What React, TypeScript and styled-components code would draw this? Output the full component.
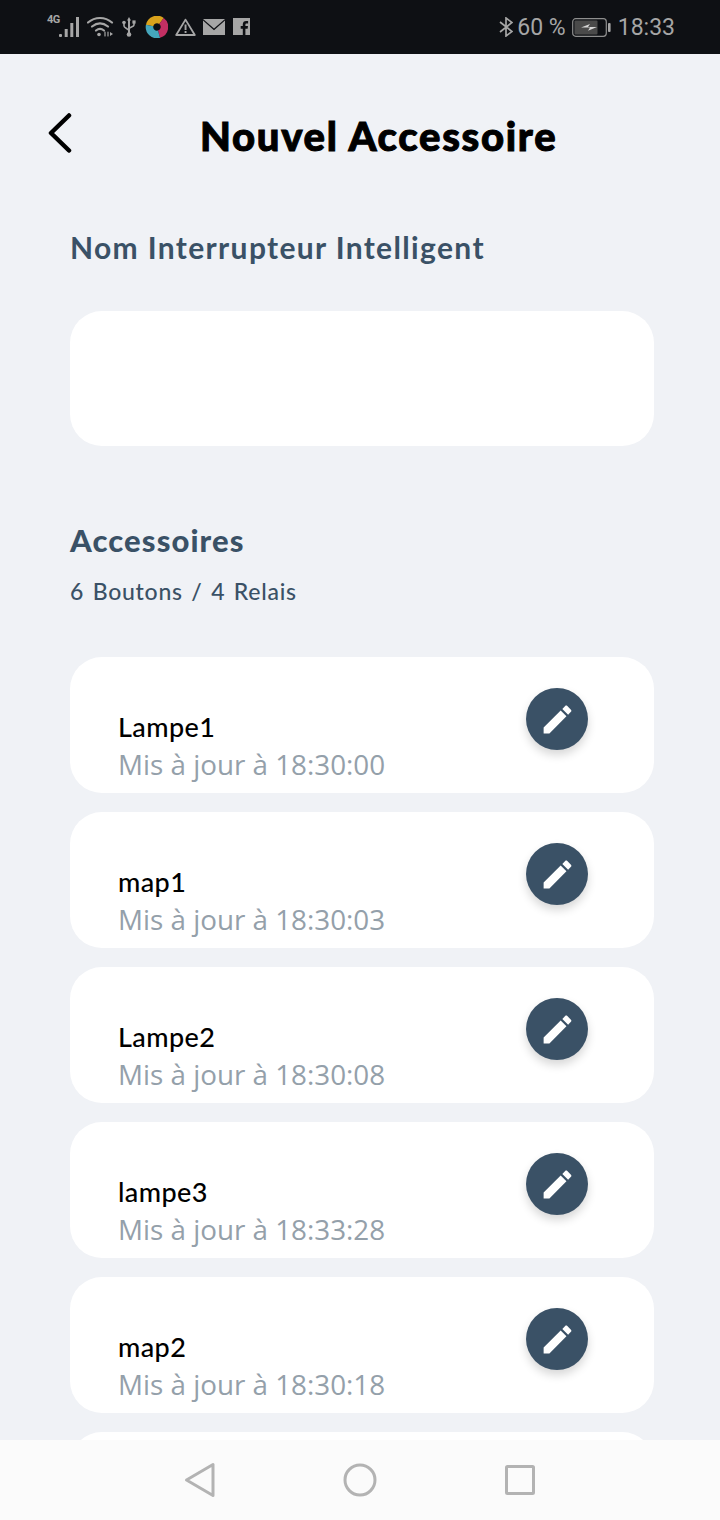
import styled, { createGlobalStyle } from "styled-components";

const accessories = [
    { name: "Lampe1", time: "18:30:00" },
    { name: "map1", time: "18:30:03" },
    { name: "Lampe2", time: "18:30:08" },
    { name: "lampe3", time: "18:33:28" },
    { name: "map2", time: "18:30:18" },
    { name: "", time: "" },
];

const GlobalStyle = createGlobalStyle`
    html, body {
        margin: 0;
        padding: 0;
        background: #f0f2f6;
    }
    * {
        box-sizing: border-box;
    }
`;

const StatusIconsLeft = () => (
    <LeftIcons>
        <FourG>4G</FourG>
        <svg width="21" height="20" viewBox="0 0 21 20" fill="#a6a6a6">
            <rect x="0" y="17" width="3" height="3" rx="1" />
            <rect x="5.7" y="12" width="3" height="8" />
            <rect x="11.3" y="6" width="3" height="14" />
            <rect x="17" y="0" width="3" height="20" />
        </svg>
        <svg width="27" height="21" viewBox="0 0 27 21" fill="none" stroke="#a6a6a6" strokeWidth="2.2" strokeLinecap="round">
            <path d="M1 6.5C8 .5 18 .5 25 6.5" />
            <path d="M5 10.5C10 6.5 16 6.5 21 10.5" />
            <path d="M9 14.5C11.5 12.5 14.5 12.5 17 14.5" />
            <circle cx="12" cy="18.5" r="1.8" fill="#a6a6a6" stroke="none" />
            <path d="M18 16v4M21 16v4" strokeWidth="1.2" />
            <path d="M23 16l3 2-3 2z" fill="#a6a6a6" stroke="none" />
        </svg>
        <svg width="16" height="20" viewBox="-1 0 16 20" fill="none" stroke="#a6a6a6" strokeWidth="1.6">
            <path d="M7 3v14" strokeWidth="2" />
            <path d="M5 3.5L7 0l2 3.5z" fill="#a6a6a6" stroke="none" />
            <circle cx="7" cy="17.5" r="2.3" fill="#a6a6a6" stroke="none" />
            <path d="M2 6v3c0 2 5 3 5 5" />
            <path d="M12 5v3c0 2-5 2-5 4" />
            <circle cx="2" cy="5.5" r="1.8" fill="#a6a6a6" stroke="none" />
            <rect x="10.4" y="3.4" width="3.2" height="3.2" fill="#a6a6a6" stroke="none" />
        </svg>
        <svg width="24" height="22" viewBox="-2 0 24 22" fill="none" strokeWidth="7.5">
            <path d="M3.6 9.5A7.5 7.5 0 0 1 15.5 5" stroke="#d9a21c" />
            <path d="M15.5 5A7.5 7.5 0 0 1 13 18.2" stroke="#c22f63" />
            <path d="M13 18.2A7.5 7.5 0 0 1 3.6 9.5" stroke="#45a6bc" />
        </svg>
        <svg width="21" height="18" viewBox="0 0 21 18" fill="none">
            <path d="M10.5 1.6L1.2 17h18.6z" stroke="#a6a6a6" strokeWidth="1.8" strokeLinejoin="round" />
            <rect x="9.6" y="6.5" width="1.9" height="5.5" fill="#a6a6a6" />
            <rect x="9.6" y="13" width="1.9" height="2" fill="#a6a6a6" />
        </svg>
        <svg width="22" height="16" viewBox="0 0 22 16">
            <path d="M0 0h22L11 9.5z" fill="#a6a6a6" />
            <path d="M0 1.6V16h22V1.6L11 11.2z" fill="#a6a6a6" />
        </svg>
        <svg width="18" height="17" viewBox="-1 0 18 17">
            <path
                fillRule="evenodd"
                d="M0 0h17v17h-4.6v-6.3h2.2l.4-2.6h-2.6V6.6c0-.8.3-1.2 1.3-1.2h1.4V3.1c-.5-.1-1.2-.1-2-.1-2 0-3.3 1.2-3.3 3.3v1.8H7.7v2.6h2.1V17H0z"
                fill="#a6a6a6"
            />
        </svg>
    </LeftIcons>
);

const StatusIconsRight = () => (
    <RightIcons>
        <svg width="14" height="20" viewBox="0 0 14 20" fill="none" stroke="#a6a6a6" strokeWidth="1.7">
            <path d="M1 5l12 9.5L7 19V1l6 4.5L1 15" />
        </svg>
        <StatusText>60 %</StatusText>
        <BatteryIcon width="39" height="19" viewBox="0 0 39 19">
            <rect x="0.7" y="0.7" width="33.6" height="17.6" rx="3" fill="none" stroke="#8e8e8e" strokeWidth="1.2" />
            <rect x="2.5" y="2.5" width="23" height="14" rx="1" fill="#4a4a4a" />
            <path d="M9 9.5l9-3.5-2 3h9l-9 3.8 2-3.3z" fill="#d6d6d6" />
            <rect x="36" y="5" width="2.6" height="9" rx="1" fill="#a6a6a6" />
        </BatteryIcon>
        <StatusText>18:33</StatusText>
    </RightIcons>
);

const EditIcon = () => (
    <svg width="37" height="37" viewBox="0 0 24 24" fill="#ffffff">
        <path d="M3 17.25V21h3.75L17.81 9.94l-3.75-3.75L3 17.25zM20.71 7.04c.39-.39.39-1.02 0-1.41l-2.34-2.34c-.39-.39-1.02-.39-1.41 0l-1.83 1.83 3.75 3.75 1.83-1.83z" />
    </svg>
);

export default function App() {
    return (
        <Screen>
            <GlobalStyle />
            <StatusBar>
                <StatusIconsLeft />
                <StatusIconsRight />
            </StatusBar>
            <Content>
                <Header>
                    <BackButton>
                        <svg width="26" height="40" viewBox="0 0 26 40" fill="none" stroke="#000000" strokeWidth="4.5" strokeLinecap="round" strokeLinejoin="round">
                            <path d="M21 2.5L3 20l18 17.5" />
                        </svg>
                    </BackButton>
                    <Title>Nouvel Accessoire</Title>
                </Header>
                <FieldLabel>Nom Interrupteur Intelligent</FieldLabel>
                <NameInput />
                <SectionTitle>Accessoires</SectionTitle>
                <SectionCount>6 Boutons / 4 Relais</SectionCount>
                <List>
                    {accessories.map((item, index) => (
                        <Card key={index}>
                            {item.name && (
                                <>
                                    <CardText>
                                        <CardName>{item.name}</CardName>
                                        <CardTime>Mis à jour à {item.time}</CardTime>
                                    </CardText>
                                    <EditButton>
                                        <EditIcon />
                                    </EditButton>
                                </>
                            )}
                        </Card>
                    ))}
                </List>
            </Content>
            <NavBar>
                <svg width="32" height="36" viewBox="0 0 32 36" fill="none" stroke="#b3b3b3" strokeWidth="3" strokeLinejoin="round">
                    <path d="M29 2.5v31L2.5 18z" />
                </svg>
                <svg width="34" height="34" viewBox="0 0 34 34" fill="none" stroke="#b3b3b3" strokeWidth="3">
                    <circle cx="17" cy="17" r="15" />
                </svg>
                <svg width="32" height="30" viewBox="0 0 32 30" fill="none" stroke="#b3b3b3" strokeWidth="3" strokeLinejoin="round">
                    <rect x="2.5" y="1.5" width="27" height="27" rx="1" />
                </svg>
            </NavBar>
        </Screen>
    );
}

const Screen = styled.div`
    width: 720px;
    height: 1520px;
    display: flex;
    flex-direction: column;
    overflow: hidden;
    background: #f0f2f6;
`;

const StatusBar = styled.div`
    height: 54px;
    flex-shrink: 0;
    background: #0e1014;
    display: flex;
    align-items: center;
    justify-content: space-between;
    padding: 0 45px 0 47px;
`;

const LeftIcons = styled.div`
    display: flex;
    align-items: center;
    gap: 7px;
    margin-top: -1px;
`;

const FourG = styled.span`
    font-family: "Roboto", sans-serif;
    font-size: 11px;
    font-weight: 700;
    color: #a6a6a6;
    width: 12px;
    margin-right: -7px;
    margin-top: -14px;
    letter-spacing: -0.5px;
`;

const RightIcons = styled.div`
    display: flex;
    align-items: center;
    gap: 4px;
`;

const StatusText = styled.span`
    font-family: "Roboto", sans-serif;
    font-size: 23px;
    color: #a6a6a6;
`;

const BatteryIcon = styled.svg`
    margin: 0 3px 0 2px;
`;

const Content = styled.div`
    flex: 1;
    min-height: 0;
    overflow: hidden;
    display: flex;
    flex-direction: column;
    padding: 58px 66px 0 70px;
`;

const Header = styled.div`
    display: flex;
    align-items: center;
    height: 50px;
    margin-left: -22px;
`;

const BackButton = styled.div`
    width: 26px;
    height: 40px;
    display: flex;
    margin-top: -6px;
`;

const Title = styled.h1`
    margin: 0 0 0 126px;
    font-family: "Lato", sans-serif;
    font-size: 40px;
    font-weight: 900;
    letter-spacing: 1.7px;
    -webkit-text-stroke: 1px #000000;
    color: #000000;
    white-space: nowrap;
`;

const FieldLabel = styled.div`
    margin-top: 67px;
    font-family: "Lato", sans-serif;
    font-size: 30px;
    font-weight: 700;
    line-height: 40px;
    letter-spacing: 1.35px;
    color: #3a5166;
`;

const NameInput = styled.div`
    margin-top: 44px;
    height: 135px;
    border-radius: 32px;
    background: #ffffff;
    flex-shrink: 0;
`;

const SectionTitle = styled.div`
    margin-top: 74px;
    font-family: "Lato", sans-serif;
    font-size: 31px;
    font-weight: 900;
    line-height: 40px;
    letter-spacing: 1.1px;
    color: #3a5166;
`;

const SectionCount = styled.div`
    margin-top: 16px;
    font-family: "Lato", sans-serif;
    font-size: 23px;
    font-weight: 500;
    line-height: 30px;
    letter-spacing: 0.75px;
    word-spacing: 2px;
    color: #3a5166;
`;

const List = styled.div`
    margin-top: 51px;
    display: flex;
    flex-direction: column;
    gap: 19px;
`;

const Card = styled.div`
    height: 136px;
    flex-shrink: 0;
    border-radius: 32px;
    background: #ffffff;
    display: flex;
    justify-content: space-between;
    align-items: flex-start;
    padding: 31px 66px 0 48px;
`;

const CardText = styled.div`
    display: flex;
    flex-direction: column;
    padding-top: 21px;
`;

const CardName = styled.div`
    font-family: "Lato", sans-serif;
    font-size: 27px;
    font-weight: 500;
    line-height: 36px;
    letter-spacing: 0.4px;
    color: #000000;
`;

const CardTime = styled.div`
    font-family: "Open Sans", sans-serif;
    font-size: 27.8px;
    line-height: 38px;
    color: #94a0aa;
`;

const EditButton = styled.div`
    width: 62px;
    height: 62px;
    border-radius: 50%;
    background: #3a5166;
    display: flex;
    align-items: center;
    justify-content: center;
    box-shadow: 0 5px 10px rgba(0, 0, 0, 0.16);
`;

const NavBar = styled.div`
    height: 80px;
    flex-shrink: 0;
    background: #fbfbfb;
    display: flex;
    align-items: center;
    gap: 127px;
    padding-left: 184px;
`;
